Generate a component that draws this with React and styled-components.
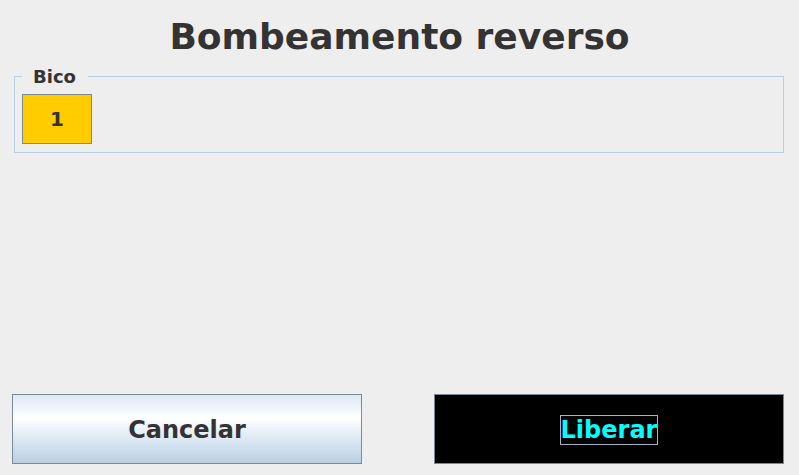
import React from "react";
import styled, { createGlobalStyle } from "styled-components";

const GlobalStyle = createGlobalStyle`
  html, body {
    margin: 0;
    padding: 0;
    background: #eeeeee;
  }
  body {
    font-family: "DejaVu Sans", "Liberation Sans", sans-serif;
    color: #333333;
  }
`;

const Screen = styled.div`
  width: 799px;
  height: 475px;
  display: flex;
  flex-direction: column;
  box-sizing: border-box;
  background: #eeeeee;
`;

const Title = styled.h1`
  margin: 16px 0 0 0;
  font-size: 36px;
  font-weight: bold;
  line-height: normal;
  text-align: center;
  color: #333333;
`;

const Group = styled.fieldset`
  margin: 9px 15px 0 14px;
  padding: 7px 7px 8px 7px;
  border: 1px solid #b8cfe5;
  display: flex;
  gap: 6px;
  min-width: 0;
`;

const Legend = styled.legend`
  margin-left: 0;
  padding: 0 12px 0 11px;
  font-size: 18px;
  font-weight: bold;
  line-height: normal;
  color: #333333;
`;

const NozzleButton = styled.button`
  width: 70px;
  height: 50px;
  box-sizing: border-box;
  border: 1px solid #7a8a99;
  background: ${(p) => (p.$active ? "#ffcc00" : "#dde8f3")};
  font-family: "DejaVu Sans", sans-serif;
  font-size: 20px;
  font-weight: bold;
  color: #333333;
  padding: 0;
`;

const Spacer = styled.div`
  flex: 1;
`;

const Footer = styled.div`
  display: grid;
  grid-template-columns: 350px 350px;
  column-gap: 72px;
  padding: 0 15px 11px 12px;
`;

const ActionButton = styled.button`
  height: 70px;
  box-sizing: border-box;
  border: 1px solid #7a8a99;
  padding: 2px 0 0 0;
  font-family: "DejaVu Sans", sans-serif;
  font-size: 24px;
  font-weight: bold;
  display: flex;
  align-items: center;
  justify-content: center;
  color: ${(p) => (p.$dark ? "#00ffff" : "#333333")};
  background: ${(p) =>
    p.$dark
      ? "#000000"
      : "linear-gradient(180deg, #dde8f3 0%, #ffffff 33%, #b8cfe5 100%)"};
`;

const FocusLabel = styled.span`
  border: 1px solid #a3b3c4;
  line-height: normal;
`;

export default function App() {
  return (
    <>
      <GlobalStyle />
      <Screen>
        <Title>Bombeamento reverso</Title>
        <Group>
          <Legend>Bico</Legend>
          <NozzleButton $active>1</NozzleButton>
        </Group>
        <Spacer />
        <Footer>
          <ActionButton>Cancelar</ActionButton>
          <ActionButton $dark>
            <FocusLabel>Liberar</FocusLabel>
          </ActionButton>
        </Footer>
      </Screen>
    </>
  );
}
